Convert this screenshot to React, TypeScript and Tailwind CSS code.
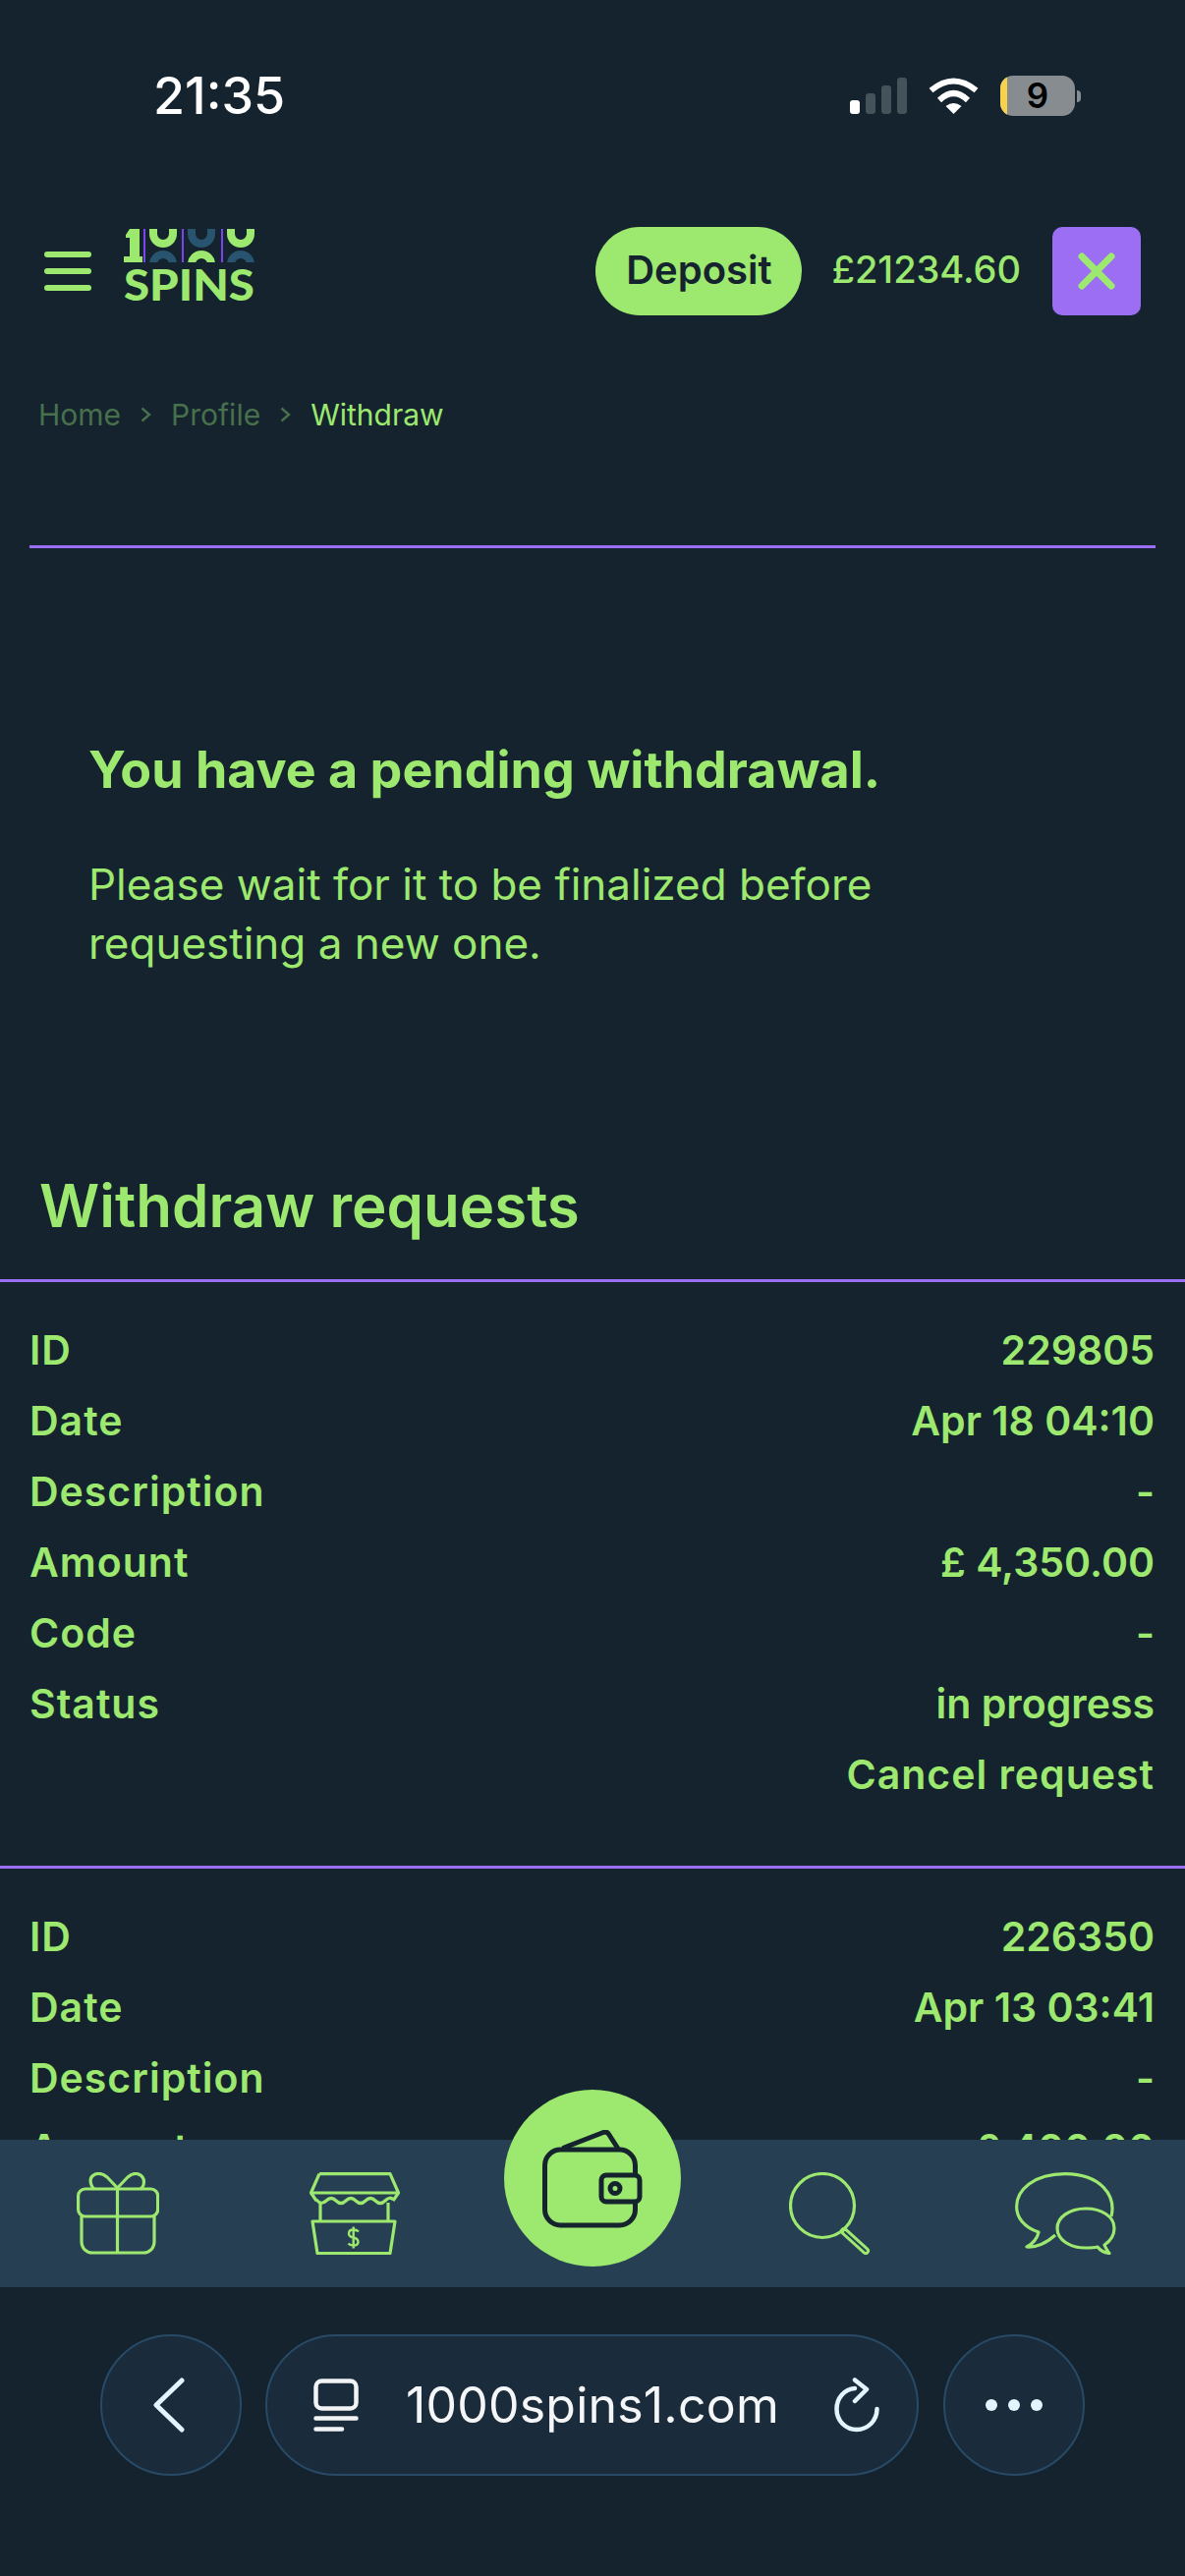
const G = "#9de86f";

function Signal() {
  return (
    <svg width="58" height="37" viewBox="0 0 58 37">
      <rect x="0" y="23" width="10" height="14" rx="3" fill="#fff" />
      <rect x="16" y="16" width="10" height="21" rx="3" fill="#445259" />
      <rect x="32" y="8" width="10" height="29" rx="3" fill="#445259" />
      <rect x="48" y="0" width="10" height="37" rx="3" fill="#445259" />
    </svg>
  );
}

function Wifi() {
  return (
    <svg width="51" height="37" viewBox="0 0 51 37" fill="none">
      <path d="M2.5 13 Q25.5 -6 48.5 13" stroke="#fff" strokeWidth="6" />
      <path d="M11 23 Q25.5 9 40 23" stroke="#fff" strokeWidth="6" />
      <path d="M25.5 37 L17.5 29 Q25.5 23 33.5 29 Z" fill="#fff" />
    </svg>
  );
}

function Battery() {
  return (
    <div className="flex items-center gap-[2px]">
      <div className="relative flex h-[41px] w-[76px] items-center justify-center overflow-hidden rounded-[13px] bg-[#878c91]">
        <div className="absolute inset-y-0 left-0 w-[7px] bg-[#f8d24f]" />
        <span className="text-[35px] font-semibold leading-none text-black">9</span>
      </div>
      <div className="h-[12px] w-[4px] rounded-r-full bg-[#878c91]" />
    </div>
  );
}

function Logo() {
  const top = [40, 119];
  return (
    <svg width="134" height="84" viewBox="0 0 134 84" fill="none">
      <defs>
        <clipPath id="logoClip">
          <rect x="0" y="0" width="134" height="34" />
        </clipPath>
      </defs>
      <g clipPath="url(#logoClip)">
        <path d="M6 0 H16 V28 H19 V34 H0 V28 H6 V9 H2 V6 Z" fill={G} />
        <rect x="20" y="0" width="2" height="34" fill="#7a45ea" />
        <rect x="59" y="0" width="2" height="34" fill="#7a45ea" />
        <rect x="99" y="0" width="2" height="34" fill="#7a45ea" />
        {top.map((c) => (
          <path key={c} d={`M${c - 10} -2 V5 A10 10 0 0 0 ${c + 10} 5 V-2`} stroke={G} strokeWidth="8" />
        ))}
        <path d="M69 -2 V5 A10 10 0 0 0 89 5 V-2" stroke="#285470" strokeWidth="8" />
        <path d="M30 36 A10 10 0 0 1 50 36" stroke="#285470" strokeWidth="8" />
        <path d="M69 36 A10 10 0 0 1 89 36" stroke={G} strokeWidth="8" />
        <path d="M109 36 A10 10 0 0 1 129 36" stroke="#285470" strokeWidth="8" />
      </g>
      <text
        x="0"
        y="73"
        textLength="133"
        lengthAdjust="spacingAndGlyphs"
        fill={G}
        className="font-['Lato',sans-serif] text-[44px] font-black"
      >
        SPINS
      </text>
    </svg>
  );
}

function Sep() {
  return (
    <svg width="11" height="16" viewBox="0 0 11 16" fill="none" className="mx-[20px]">
      <path d="M1.5 1.5 L9 8 L1.5 14.5" stroke="currentColor" strokeWidth="2.4" />
    </svg>
  );
}

function Row({ label, value }: { label?: string; value: string }) {
  return (
    <div className="flex h-[72px] items-center justify-between">
      <span className="tracking-[1px]">{label}</span>
      <span className={label ? "tracking-[0px]" : "tracking-[1px]"}>{value}</span>
    </div>
  );
}

function Request({ rows, cancel }: { rows: [string, string][]; cancel?: boolean }) {
  return (
    <section className={`border-t-[3px] border-[#9b6ef3] pl-[30px] pr-[31px] pt-[34px] ${cancel ? "pb-[56px]" : ""}`}>
      {rows.map(([l, v]) => (
        <Row key={l} label={l} value={v} />
      ))}
      {cancel && <Row value="Cancel request" />}
    </section>
  );
}

function Gift() {
  return (
    <svg width="84" height="84" viewBox="0 0 84 84" fill="none" stroke={G} strokeWidth="3.2" strokeLinejoin="round">
      <rect x="1.6" y="17" width="81" height="28" rx="7" />
      <path d="M5 45 V71 a11 11 0 0 0 11 11 H68 a11 11 0 0 0 11 -11 V45" />
      <path d="M41.5 17 V82" />
      <path d="M41.5 16 L31 5 Q25 0 19 2 Q12 5 15 13 Q16 16 18 17" />
      <path d="M41.5 16 L52 5 Q58 0 63 2 Q70 5 68 13 Q67 16 65 17" />
    </svg>
  );
}

function Shop() {
  return (
    <svg width="92" height="84" viewBox="0 0 92 84" fill="none" stroke={G} strokeWidth="3.2" strokeLinejoin="round">
      <path d="M10 1.6 H82 L90.5 21 L85 29 M10 1.6 L1.5 21 L7 29" />
      <path d="M1.5 21 H90.5" />
      <path d="M7 28 Q12 34 17 29 T27 29 T37 29 T47 29 T57 29 T67 29 T77 29 T85 28" />
      <path d="M11 31 V50 M80 31 V50" />
      <path d="M3 50 H87 L82 82.5 H8 Z" />
      <path
        d="M50 60.5 Q48 58.5 44.5 58.5 Q40 58.5 40 62.5 Q40 65.5 44.5 66.5 Q49.5 67.5 49.5 71 Q49.5 74.5 44.5 74.5 Q41 74.5 39.5 72.5 M44.7 55.5 V77.5"
        strokeWidth="2.4"
      />
    </svg>
  );
}

function Wallet() {
  return (
    <svg width="104" height="100" viewBox="0 0 104 100" fill="none" stroke="#14232e" strokeWidth="5" strokeLinejoin="round">
      <rect x="2.5" y="20" width="92" height="77" rx="16" />
      <path d="M22 18 L62 2.5 Q66 1 68 5 L77 19" strokeLinecap="round" />
      <rect x="60" y="46" width="39" height="27" rx="5" fill={G} />
      <circle cx="74" cy="59.5" r="5" />
    </svg>
  );
}

function Search() {
  return (
    <svg width="84" height="84" viewBox="0 0 84 84" fill="none">
      <ellipse cx="34" cy="34" rx="32.5" ry="32.5" stroke={G} strokeWidth="3.2" />
      <path d="M56 60 L78 80" stroke={G} strokeWidth="8" strokeLinecap="round" />
      <path d="M57 61 L78 80" stroke="#263f52" strokeWidth="2" strokeLinecap="round" />
    </svg>
  );
}

function Chat() {
  return (
    <svg width="104" height="84" viewBox="0 0 104 84" fill="none" stroke={G} strokeWidth="3.2" strokeLinejoin="round">
      <path d="M98 45 C103 24 88 2 51 1.6 C19 1.6 1.6 18 1.6 35 C1.6 46 9 56 24 61 C23 67 18 73 12 76 C24 77 33 71 41 64" />
      <path d="M101 57 C101 45 88 37 72 37 C55 37 43 46 43 57 C43 69 56 77 72 77 C76 77 80 77 84 76 C87 80 91 82 96 82.5 C93 79 92 76 91 74 C97 70 101 64 101 57 Z" />
    </svg>
  );
}

export default function App() {
  return (
    <div className="flex h-[2622px] w-[1206px] flex-col overflow-hidden bg-[#14232e] font-['Inter',sans-serif] text-[#9de86f]">
      <div className="flex-1 overflow-hidden">
        {/* status bar */}
        <div className="flex h-[231px] items-start justify-between pl-[156px] pr-[106px] pt-[72px]">
          <span className="text-[52px] font-medium leading-[52px] text-white">21:35</span>
          <div className="flex items-center pt-[5px]">
            <Signal />
            <div className="ml-[22px] mr-[22px]">
              <Wifi />
            </div>
            <Battery />
          </div>
        </div>

        {/* header */}
        <header className="flex h-[90px] items-center pl-[45px] pr-[45px]">
          <div className="flex h-[40px] w-[48px] flex-col justify-between">
            <div className="h-[6px] rounded-full bg-[#9de86f]" />
            <div className="h-[6px] rounded-full bg-[#9de86f]" />
            <div className="h-[6px] rounded-full bg-[#9de86f]" />
          </div>
          <div className="mb-[2px] ml-[33px]">
            <Logo />
          </div>
          <div className="ml-auto flex items-center">
            <button className="flex h-[90px] w-[210px] items-center justify-center rounded-full bg-[#9de86f] pb-[2px] text-[40px] font-semibold text-[#14232e]">
              Deposit
            </button>
            <span className="mb-[4px] ml-[30px] text-[38px] font-medium">£21234.60</span>
            <div className="ml-[32px] flex h-[90px] w-[90px] items-center justify-center rounded-[10px] bg-[#9b6ef3]">
              <svg width="38" height="38" viewBox="0 0 38 38" fill="none" stroke={G} strokeWidth="7" strokeLinecap="round">
                <path d="M4 4 L34 34 M34 4 L4 34" />
              </svg>
            </div>
          </div>
        </header>

        {/* breadcrumb */}
        <nav className="flex h-[234px] items-start pl-[39px] pt-[83px] text-[30px] leading-[36px]">
          <span className="text-[#47704c]">Home</span>
          <span className="flex h-[36px] items-center text-[#47704c]">
            <Sep />
          </span>
          <span className="text-[#47704c]">Profile</span>
          <span className="flex h-[36px] items-center text-[#47704c]">
            <Sep />
          </span>
          <span>Withdraw</span>
        </nav>
        <div className="mx-[30px] h-[3px] bg-[#9b6ef3]" />

        {/* pending message */}
        <div className="h-[590px] pl-[90px] pt-[195px]">
          <h2 className="text-[52px] font-bold leading-[62px]">You have a pending withdrawal.</h2>
          <p className="mt-[55px] w-[900px] text-[44px] leading-[60px]">
            Please wait for it to be finalized before
            <br />
            requesting a new one.
          </p>
        </div>

        {/* table */}
        <div className="h-[154px] pl-[40px] pt-[43px]">
          <h1 className="text-[60px] font-semibold leading-[72px]">Withdraw requests</h1>
        </div>
        <div className="text-[41px] font-semibold">
          <Request
            cancel
            rows={[
              ["ID", "229805"],
              ["Date", "Apr 18 04:10"],
              ["Description", "-"],
              ["Amount", "£ 4,350.00"],
              ["Code", "-"],
              ["Status", "in progress"],
            ]}
          />
          <Request
            rows={[
              ["ID", "226350"],
              ["Date", "Apr 13 03:41"],
              ["Description", "-"],
              ["Amount", "£ 400.00"],
            ]}
          />
        </div>
      </div>

      {/* bottom navigation */}
      <div className="relative flex h-[150px] shrink-0 items-start bg-[#263f52] pt-[33px]">
        <div className="ml-[78px]">
          <Gift />
        </div>
        <div className="ml-[153px]">
          <Shop />
        </div>
        <div className="absolute left-[513px] top-[-51px] flex h-[180px] w-[180px] items-start rounded-full bg-[#9de86f] pl-[39px] pt-[41px]">
          <Wallet />
        </div>
        <div className="ml-[396px]">
          <Search />
        </div>
        <div className="ml-[146px]">
          <Chat />
        </div>
      </div>

      {/* browser chrome */}
      <div className="flex h-[294px] shrink-0 items-start pl-[102px] pt-[48px]">
        <button className="flex h-[144px] w-[144px] items-center justify-center rounded-full border-[2px] border-[#284a66] bg-[#1a2c3b]">
          <svg width="32" height="56" viewBox="0 0 32 56" fill="none" stroke="#e4f4ff" strokeWidth="5" strokeLinecap="round" strokeLinejoin="round" className="mr-[4px]">
            <path d="M29 3 L3 28 L29 53" />
          </svg>
        </button>
        <div className="ml-[24px] flex h-[144px] w-[665px] items-center rounded-full border-[2px] border-[#284a66] bg-[#1a2c3b] pl-[47px]">
          <svg width="46" height="54" viewBox="0 0 46 54" fill="none" stroke="#f2f3f5" strokeWidth="4.5" strokeLinecap="round">
            <rect x="2.5" y="2.5" width="41" height="28" rx="6" />
            <path d="M2.5 40.5 H43.5 M2.5 51.5 H29" />
          </svg>
          <span className="ml-[48px] text-[50px] leading-none tracking-[0.2px] text-[#f5f6f8]">1000spins1.com</span>
          <svg width="46" height="56" viewBox="0 0 46 56" fill="none" stroke="#e4f4ff" strokeWidth="4.5" strokeLinecap="round" strokeLinejoin="round" className="ml-[56px]">
            <path d="M21 11 C10 12 2.5 21 2.5 32 C2.5 44 11.5 53 23 53 C34 53 43.5 44 43.5 32" />
            <path d="M21 2.5 L33 12 L21 24" />
          </svg>
        </div>
        <button className="ml-[25px] flex h-[144px] w-[144px] items-center justify-center gap-[11px] rounded-full border-[2px] border-[#284a66] bg-[#1a2c3b]">
          <span className="h-[12px] w-[12px] rounded-full bg-[#e4f4ff]" />
          <span className="h-[12px] w-[12px] rounded-full bg-[#e4f4ff]" />
          <span className="h-[12px] w-[12px] rounded-full bg-[#e4f4ff]" />
        </button>
      </div>
    </div>
  );
}
